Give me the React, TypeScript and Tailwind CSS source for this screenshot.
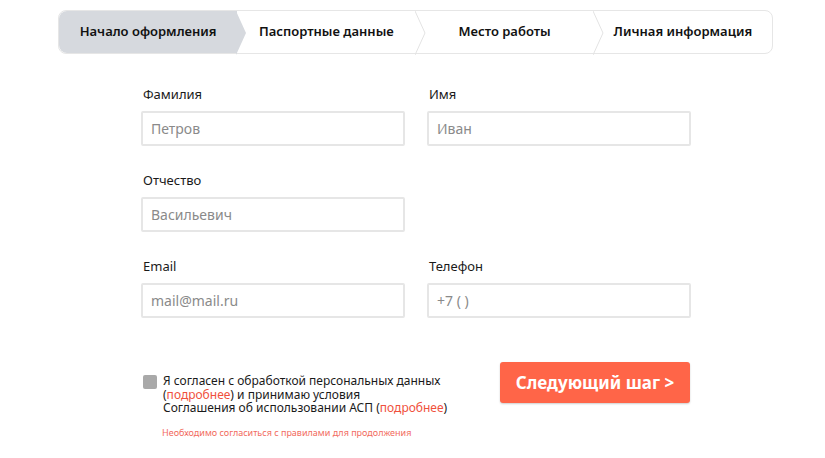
const steps = ["Начало оформления", "Паспортные данные", "Место работы", "Личная информация"];

function Chevron({ active }: { active: boolean }) {
  return (
    <svg className="absolute top-0 right-[-10px] z-10" width="11" height="44" viewBox="0 0 11 44">
      {active ? (
        <polygon points="0,0 10,22 0,44" fill="#d6d9de" />
      ) : (
        <polyline points="0,0 10,22 0,44" fill="none" stroke="#e3e3e3" strokeWidth="1" />
      )}
    </svg>
  );
}

function Field({ label, placeholder }: { label: string; placeholder: string }) {
  return (
    <div className="flex flex-col">
      <label className="text-[13px] leading-[18px] text-[#1a1a1a] pl-[2px]">{label}</label>
      <input
        placeholder={placeholder}
        className="mt-[8px] h-[35px] w-[264px] rounded-[2px] border-2 border-[#e6e6e6] px-[8px] text-[14px] text-[#333] placeholder:text-[#8a8a8a] outline-none"
      />
    </div>
  );
}

export default function App() {
  return (
    <div className="min-h-[458px] bg-white pt-[10px] [font-family:'Noto_Sans',sans-serif]">
      <div className="ml-[58px] w-[715px]">
        <div className="grid h-[44px] grid-cols-4 rounded-lg border border-[#e6e6e6]">
          {steps.map((s, i) => (
            <div
              key={s}
              className={`relative flex items-center justify-center text-[13px] font-semibold text-[#111] ${
                i === 0 ? "rounded-l-lg bg-[#d6d9de]" : ""
              }`}
            >
              {s}
              {i < 3 && <Chevron active={i === 0} />}
            </div>
          ))}
        </div>

        <div className="ml-[83px] mt-[31px] grid w-[550px] grid-cols-2 gap-x-[22px] gap-y-[25px]">
          <Field label="Фамилия" placeholder="Петров" />
          <Field label="Имя" placeholder="Иван" />
          <Field label="Отчество" placeholder="Васильевич" />
          <div />
          <Field label="Email" placeholder="mail@mail.ru" />
          <Field label="Телефон" placeholder="+7 ( )" />
        </div>

        <div className="ml-[85px] mt-[56px] flex">
          <div className="w-[357px]">
            <div className="flex gap-[6px]">
              <span className="mt-[1px] h-[14px] w-[14px] shrink-0 rounded-[2px] bg-[#a9a9a9]" />
              <p className="text-[12px] leading-[13.5px] text-[#1a1a1a]">
                Я согласен с обработкой персональных данных
                <br />(<span className="text-[#f0503c]">подробнее</span>) и принимаю условия
                <br />
                Соглашения об использовании АСП (<span className="text-[#f0503c]">подробнее</span>)
              </p>
            </div>
            <p className="mt-[11px] pl-[19px] text-[9px] text-[#f26b5e]">
              Необходимо согласиться с правилами для продолжения
            </p>
          </div>
          <button className="-mt-[12px] h-[41px] w-[190px] rounded-[3px] bg-[#ff6548] text-[17px] font-bold text-white shadow-[0_1px_2px_rgba(0,0,0,0.2)]">
            Следующий шаг &gt;
          </button>
        </div>
      </div>
    </div>
  );
}
